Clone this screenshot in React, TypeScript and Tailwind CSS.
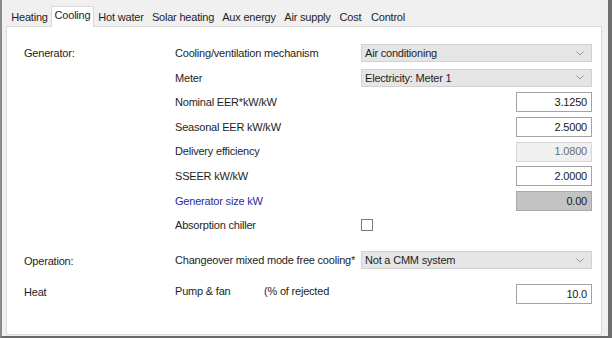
import React from 'react';

const tabs = [
  { label: 'Heating', w: 'w-[43px]' },
  { label: 'Cooling', w: 'w-[43px]', active: true },
  { label: 'Hot water', w: 'w-[54px]' },
  { label: 'Solar heating', w: 'w-[70px]' },
  { label: 'Aux energy', w: 'w-[62px]' },
  { label: 'Air supply', w: 'w-[55px]' },
  { label: 'Cost', w: 'w-[31px]' },
  { label: 'Control', w: 'w-[44px]' },
];

function Chevron() {
  return (
    <svg width="8" height="5" viewBox="0 0 8 5" className="shrink-0">
      <polyline points="0.5,0.5 4,4 7.5,0.5" fill="none" stroke="#9a9a9a" strokeWidth="1" />
    </svg>
  );
}

function Select({ value }: { value: string }) {
  return (
    <div className="flex h-[18px] w-[231px] items-center justify-between border border-[#d2d2d2] bg-[#e5e5e5] pl-[3px] pr-[7px]">
      <span>{value}</span>
      <Chevron />
    </div>
  );
}

function NumBox({ value, kind = 'edit' }: { value: string; kind?: 'edit' | 'disabled' | 'calc' }) {
  const cls =
    kind === 'disabled'
      ? 'border-[#d6d6d6] bg-[#f0f0f0] text-[#6d6d6d]'
      : kind === 'calc'
        ? 'border-[#a9a9a9] bg-[#c3c3c3] text-[#1a1a1a]'
        : 'border-[#a3a3a3] bg-white text-[#1a1a1a]';
  return (
    <div className="flex w-[231px] justify-end">
      <div className={`flex h-[20px] w-[76px] items-center justify-end border pr-[4px] ${cls}`}>{value}</div>
    </div>
  );
}

function Row({ label, children, blue }: { label: React.ReactNode; children?: React.ReactNode; blue?: boolean }) {
  return (
    <div className="flex h-[24.6px] items-center">
      <div className={`w-[186px] whitespace-nowrap ${blue ? 'text-[#2b2b9a]' : ''}`}>{label}</div>
      {children}
    </div>
  );
}

export default function App() {
  return (
    <div
      className="flex h-[338px] w-[612px] flex-col border-b-2 border-l-2 border-r-4 border-b-[#6a6a6a] border-l-[#8a8a8a] border-r-[#6e6e6e] bg-[#f0f0f0] text-[11px] tracking-[-0.2px] text-[#1e1e1e]"
      style={{ fontFamily: '"Liberation Sans", Arial, sans-serif' }}
    >
      <div className="ml-[6px] mt-[8px] flex h-[18px] items-end">
        {tabs.map((t) =>
          t.active ? (
            <div
              key={t.label}
              className={`${t.w} relative z-10 -mb-px flex h-[21px] items-center justify-center border border-b-0 border-[#d9d9d9] bg-white pb-[3px]`}
            >
              {t.label}
            </div>
          ) : (
            <div key={t.label} className={`${t.w} flex h-[18px] items-center justify-center`}>
              {t.label}
            </div>
          ),
        )}
      </div>
      <div className="mb-px ml-[4px] mr-[6px] flex flex-1 flex-col border border-[#dadada] bg-white pl-[17px] pt-[14px]">
        <div className="flex">
          <div className="w-[151px] pt-[4px]">Generator:</div>
          <div className="flex flex-col">
            <Row label="Cooling/ventilation mechanism">
              <Select value="Air conditioning" />
            </Row>
            <Row label="Meter">
              <Select value="Electricity: Meter 1" />
            </Row>
            <Row label="Nominal EER*kW/kW">
              <NumBox value="3.1250" />
            </Row>
            <Row label="Seasonal EER kW/kW">
              <NumBox value="2.5000" />
            </Row>
            <Row label="Delivery efficiency">
              <NumBox value="1.0800" kind="disabled" />
            </Row>
            <Row label="SSEER kW/kW">
              <NumBox value="2.0000" />
            </Row>
            <Row label="Generator size kW" blue>
              <NumBox value="0.00" kind="calc" />
            </Row>
            <Row label="Absorption chiller">
              <div className="h-[12px] w-[12px] border border-[#7a7a7a] bg-white" />
            </Row>
          </div>
        </div>
        <div className="mt-[10px] flex">
          <div className="w-[151px] pt-[5px]">Operation:</div>
          <Row label="Changeover mixed mode free cooling*">
            <Select value="Not a CMM system" />
          </Row>
        </div>
        <div className="mt-[8px] flex">
          <div className="w-[151px] pt-[4px]">Heat</div>
          <div className="flex h-[24.6px] items-start pt-[3px]">
            <div className="flex w-[186px]">
              <span className="w-[89px]">Pump &amp; fan</span>
              <span>(% of rejected</span>
            </div>
            <div className="pt-[1px]">
              <NumBox value="10.0" />
            </div>
          </div>
        </div>
      </div>
    </div>
  );
}
